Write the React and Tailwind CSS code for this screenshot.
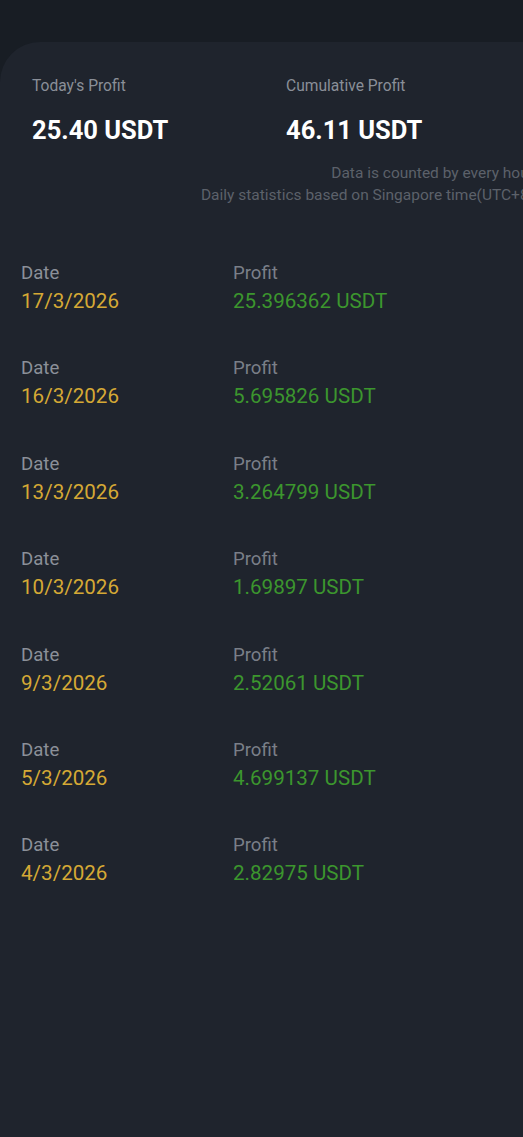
import React from 'react';

const records = [
    { date: '17/3/2026', profit: '25.396362 USDT' },
    { date: '16/3/2026', profit: '5.695826 USDT' },
    { date: '13/3/2026', profit: '3.264799 USDT' },
    { date: '10/3/2026', profit: '1.69897 USDT' },
    { date: '9/3/2026', profit: '2.52061 USDT' },
    { date: '5/3/2026', profit: '4.699137 USDT' },
    { date: '4/3/2026', profit: '2.82975 USDT' },
];

const App = () => {
    return (
        <div className="min-h-screen bg-[#181d24] pt-[42px] overflow-hidden font-['Roboto',sans-serif]">
            <div className="w-[570px] min-h-[1095px] bg-[#1f242d] rounded-tl-[40px]">
                {/* Summary */}
                <div className="flex pt-[35px] pl-[32px]">
                    <div className="w-[254px]">
                        <p className="text-[15.6px] leading-[18px] text-[#8a8f98]">Today's Profit</p>
                        <p className="mt-[22px] text-[25.5px] leading-[26px] font-bold text-white">25.40 USDT</p>
                    </div>
                    <div>
                        <p className="text-[15.6px] leading-[18px] text-[#8a8f98]">Cumulative Profit</p>
                        <p className="mt-[22px] text-[25.5px] leading-[26px] font-bold text-white">46.11 USDT</p>
                    </div>
                </div>

                <div className="mt-[19px] pr-[36px] text-right text-[15.5px] leading-[22px] text-[#5c616a]">
                    <p>Data is counted by every hour</p>
                    <p>Daily statistics based on Singapore time(UTC+8)</p>
                </div>

                {/* Daily records */}
                <div className="mt-[54px] flex flex-col gap-[39.4px]">
                    {records.map((r) => (
                        <div key={r.date} className="flex pl-[21px]">
                            <div className="w-[212px]">
                                <p className="text-[18.6px] leading-[27px] text-[#8b9099]">Date</p>
                                <p className="text-[20.6px] leading-[29px] text-[#d5a935]">{r.date}</p>
                            </div>
                            <div>
                                <p className="text-[18.6px] leading-[27px] text-[#7a7f88]">Profit</p>
                                <p className="text-[20.6px] leading-[29px] text-[#3c962e]">{r.profit}</p>
                            </div>
                        </div>
                    ))}
                </div>
            </div>
        </div>
    );
};

export default App;
